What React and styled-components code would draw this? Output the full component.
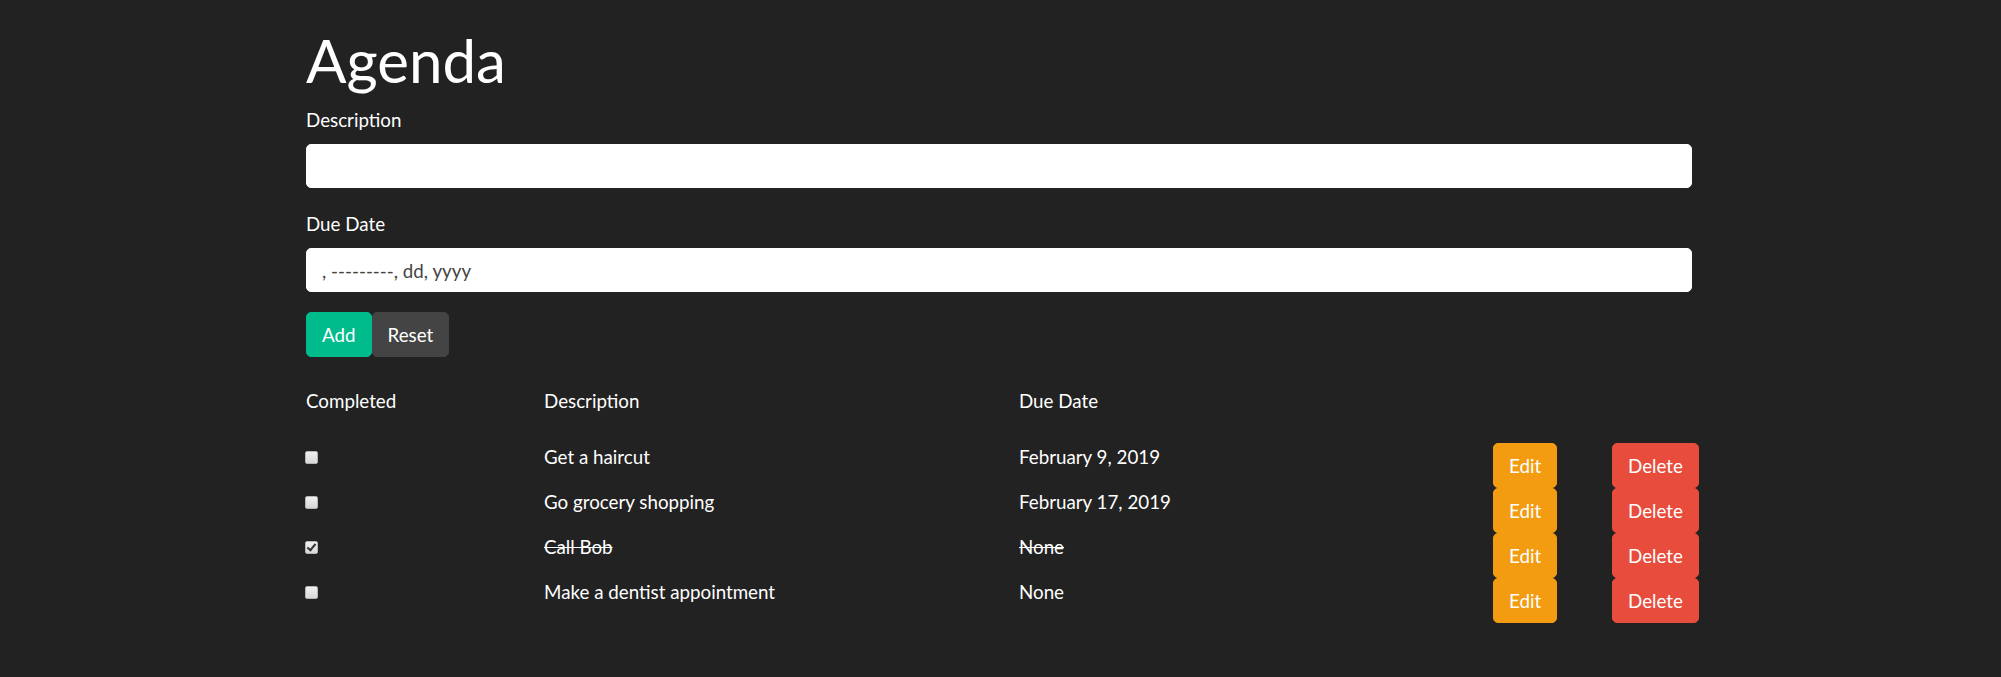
import React from 'react';
import styled, { createGlobalStyle } from 'styled-components';

const GlobalStyle = createGlobalStyle`
  html, body {
    margin: 0;
    background: #222222;
  }
  body {
    font-family: Lato, "Open Sans", sans-serif;
    font-size: 18.75px;
    line-height: 1.5;
    color: #ffffff;
  }
  * {
    box-sizing: border-box;
  }
`;

const todos = [
  { id: 1, description: 'Get a haircut', due: 'February 9, 2019', done: false },
  { id: 2, description: 'Go grocery shopping', due: 'February 17, 2019', done: false },
  { id: 3, description: 'Call Bob', due: 'None', done: true },
  { id: 4, description: 'Make a dentist appointment', due: 'None', done: false }
];

const App = () => {
  return (
    <Page>
      <GlobalStyle />
      <Container>
        <Title>Agenda</Title>

        <FormGroup>
          <Label>Description</Label>
          <TextInput type="text" />
        </FormGroup>

        <FormGroup>
          <Label>Due Date</Label>
          <TextInput type="text" placeholder=", ---------, dd, yyyy" />
        </FormGroup>

        <ButtonRow>
          <Button $bg="#00bc8c">Add</Button>
          <Button $bg="#444444">Reset</Button>
        </ButtonRow>

        <Table>
          <HeadRow>
            <Cell>Completed</Cell>
            <Cell>Description</Cell>
            <Cell>Due Date</Cell>
            <Cell />
            <Cell />
          </HeadRow>
          {todos.map(todo => (
            <Row key={todo.id}>
              <Cell>
                <CheckBox type="checkbox" defaultChecked={todo.done} />
              </Cell>
              <Cell $strike={todo.done}>{todo.description}</Cell>
              <Cell $strike={todo.done}>{todo.due}</Cell>
              <Cell>
                <Button $bg="#f39c12">Edit</Button>
              </Cell>
              <Cell>
                <Button $bg="#e74c3c">Delete</Button>
              </Cell>
            </Row>
          ))}
        </Table>
      </Container>
    </Page>
  );
};

const Page = styled.div`
  min-height: 677px;
  padding-top: 24px;
  background: #222222;
`;

const Container = styled.div`
  width: 1425px;
  margin: 0 auto;
  padding: 0 21px 0 18px;
`;

const Title = styled.h1`
  margin: 0 0 10px 0;
  font-size: 60px;
  font-weight: 400;
  line-height: 72px;
  color: #ffffff;
`;

const FormGroup = styled.div`
  display: flex;
  flex-direction: column;
  margin-bottom: 22px;
`;

const Label = styled.label`
  display: block;
  margin-bottom: 10px;
  line-height: 28px;
`;

const TextInput = styled.input`
  display: block;
  width: 100%;
  height: 44px;
  padding: 0 15px;
  border: 1px solid #ffffff;
  border-radius: 5px;
  background: #ffffff;
  font-family: Lato, "Open Sans", sans-serif;
  font-size: 18.75px;
  color: #444444;
  outline: none;

  &::placeholder {
    color: #444444;
    opacity: 1;
  }
`;

const ButtonRow = styled.div`
  display: flex;
  margin-top: -2px;
`;

const Button = styled.button`
  display: inline-block;
  height: 45px;
  padding: 7px 15px;
  border: 1px solid ${p => p.$bg};
  border-radius: 5px;
  background: ${p => p.$bg};
  color: #ffffff;
  font-family: Lato, "Open Sans", sans-serif;
  font-size: 18.75px;
  line-height: 29px;
  cursor: pointer;
`;

const Table = styled.div`
  margin-top: 30px;
`;

const HeadRow = styled.div`
  display: grid;
  grid-template-columns: 238px 475px 474px 119px auto;
  height: 28px;
  margin-bottom: 28px;
  line-height: 28px;
`;

const Row = styled.div`
  display: grid;
  grid-template-columns: 238px 475px 474px 119px auto;
  height: 45px;
  line-height: 28px;
`;

const Cell = styled.div`
  text-decoration: ${p => (p.$strike ? 'line-through' : 'none')};
  white-space: nowrap;
`;

const CheckBox = styled.input`
  appearance: none;
  display: block;
  width: 13px;
  height: 13px;
  margin: 8px 0 0 -1px;
  border: 1px solid #b5b5b5;
  border-radius: 2px;
  background: linear-gradient(#f0f0f0, #d8d8d8);
  position: relative;

  &:checked::after {
    content: '';
    position: absolute;
    left: 3px;
    top: 0px;
    width: 3px;
    height: 7px;
    border: solid #333333;
    border-width: 0 2px 2px 0;
    transform: rotate(40deg);
  }
`;

export default App;
